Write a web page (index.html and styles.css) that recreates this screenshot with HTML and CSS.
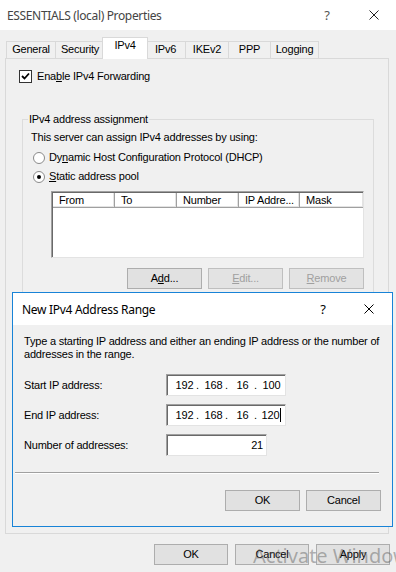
FILE: index.html
```html
<!DOCTYPE html>
<html>
<head>
<meta charset="utf-8">
<link rel="stylesheet" href="styles.css">
</head>
<body>
<div class="win">
  <div class="titlebar">
    <span class="title">ESSENTIALS (local) Properties</span>
    <span class="help">?</span>
    <svg class="close" width="10" height="10" viewBox="0 0 10 10"><path d="M0.5 0.5 L9.5 9.5 M9.5 0.5 L0.5 9.5" stroke="#222" stroke-width="1" fill="none"/></svg>
  </div>

  <div class="tabs">
    <div class="tab t-general">General</div>
    <div class="tab t-security">Security</div>
    <div class="tab t-ipv4 sel">IPv4</div>
    <div class="tab t-ipv6">IPv6</div>
    <div class="tab t-ikev2">IKEv2</div>
    <div class="tab t-ppp">PPP</div>
    <div class="tab t-logging">Logging</div>
  </div>

  <div class="panel">
    <div class="check-row">
      <span class="checkbox"><svg width="9" height="9" viewBox="0 0 9 9"><path d="M1 4 L3.5 6.5 L8 1.5" stroke="#000" stroke-width="1.8" fill="none"/></svg></span>
      <span class="lbl">Ena<u>b</u>le IPv4 Forwarding</span>
    </div>

    <div class="group">
      <div class="legend">IPv4 address assignment</div>
      <div class="desc">This server can assign IPv4 addresses by using:</div>
      <div class="radio-row r1"><span class="radio"></span><span class="lbl">Dy<u>n</u>amic Host Configuration Protocol (DHCP)</span></div>
      <div class="radio-row r2"><span class="radio on"></span><span class="lbl"><u>S</u>tatic address pool</span></div>
      <div class="list">
        <div class="list-head">
          <div class="col c1">From</div>
          <div class="col c2">To</div>
          <div class="col c3">Number</div>
          <div class="col c4">IP Addre...</div>
          <div class="col c5">Mask</div>
        </div>
      </div>
      <div class="btn-row">
        <div class="btn">A<u>d</u>d...</div>
        <div class="btn dis"><u>E</u>dit...</div>
        <div class="btn dis"><u>R</u>emove</div>
      </div>
    </div>
  </div>

  <div class="footer">
    <div class="btn wide">OK</div>
    <div class="btn wide">Cancel</div>
    <div class="btn wide">Apply</div>
  </div>

  <div class="dialog">
    <div class="dlg-title">
      <span class="title">New IPv4 Address Range</span>
      <span class="help">?</span>
      <svg class="close" width="10" height="10" viewBox="0 0 10 10"><path d="M0.5 0.5 L9.5 9.5 M9.5 0.5 L0.5 9.5" stroke="#000" stroke-width="1" fill="none"/></svg>
    </div>
    <div class="dlg-body">
      <p class="intro">Type a starting IP address and either an ending IP address or the number of addresses in the range.</p>
      <div class="field">
        <span class="flabel">Start IP address:</span>
        <div class="ip"><span class="num">192</span><span class="dot">.</span><span class="num">168</span><span class="dot">.</span><span class="num">16</span><span class="dot">.</span><span class="num">100</span></div>
      </div>
      <div class="field">
        <span class="flabel">End IP address:</span>
        <div class="ip"><span class="num">192</span><span class="dot">.</span><span class="num">168</span><span class="dot">.</span><span class="num">16</span><span class="dot">.</span><span class="num">120<span class="caret"></span></span></div>
      </div>
      <div class="field">
        <span class="flabel">Number of addresses:</span>
        <div class="numbox">21</div>
      </div>
      <div class="sep"></div>
      <div class="dlg-btns">
        <div class="btn">OK</div>
        <div class="btn">Cancel</div>
      </div>
    </div>
  </div>

  <div class="watermark">Activate Windows</div>
</div>
</body>
</html>
```

FILE: styles.css
```css
* { box-sizing: border-box; }
body {
  margin: 0;
  background: #f0f0f0;
  font-family: "Liberation Sans", Arial, sans-serif;
  font-size: 11px;
  letter-spacing: -0.2px;
  color: #000;
}
u { text-decoration: underline; text-underline-offset: 1px; }

.win {
  position: relative;
  width: 396px;
  height: 572px;
  overflow: hidden;
}

.titlebar {
  height: 30px;
  background: #fff;
  display: flex;
  align-items: center;
  padding-left: 7px;
}
.titlebar .title {
  font-family: "Noto Sans", sans-serif;
  font-size: 12px;
  letter-spacing: -0.35px;
  color: #444;
  flex: 1;
}
.help {
  font-family: "Noto Sans", sans-serif;
  font-size: 13px;
  letter-spacing: 0;
}
.titlebar .help { color: #555; margin-right: 39px; }
.titlebar .close { margin-right: 17px; }

.tabs {
  display: flex;
  align-items: flex-end;
  height: 22px;
  margin: 7px 0 -1px 6px;
  position: relative;
  z-index: 1;
}
.tab {
  height: 17px;
  margin-bottom: 1px;
  border: 1px solid #d9d9d9;
  border-bottom: none;
  margin-right: -1px;
  background: #f0f0f0;
  text-align: center;
  padding-top: 1px;
  line-height: 13px;
}
.tab.sel {
  height: 22px;
  margin-bottom: 0;
  background: #fff;
  padding-top: 1px;
  margin-left: -2px;
  margin-right: -3px;
  position: relative;
  z-index: 2;
}
.t-general { width: 50px; }
.t-security { width: 50px; }
.t-ipv4 { width: 46px; }
.t-ipv6 { width: 41px; }
.t-ikev2 { width: 44px; }
.t-ppp { width: 43px; }
.t-logging { width: 49px; }

.panel {
  margin-left: 5px;
  width: 384px;
  height: 476px;
  border: 1px solid #d9d9d9;
  background: #f0f0f0;
  overflow: hidden;
}

.check-row {
  display: flex;
  align-items: center;
  margin-top: 11px;
  padding-left: 13px;
  height: 13px;
}
.checkbox {
  width: 13px;
  height: 13px;
  background: #fff;
  border: 1px solid #333;
  display: flex;
  align-items: center;
  justify-content: center;
  margin-right: 5px;
}
.lbl { line-height: 13px; }

.group {
  margin: 36px 0 0 16px;
  width: 352px;
  height: 182px;
  border: 1px solid #dcdcdc;
}
.legend {
  width: fit-content;
  margin: -7px 0 0 5px;
  padding: 0 1px;
  line-height: 13px;
  background: #f0f0f0;
}
.desc {
  margin: 5px 0 0 8px;
  line-height: 13px;
}
.radio-row {
  display: flex;
  align-items: center;
  height: 13px;
  padding-left: 10px;
}
.radio-row.r1 { margin-top: 7px; }
.radio-row.r2 { margin-top: 6px; }
.radio {
  width: 12px;
  height: 12px;
  border-radius: 50%;
  border: 1px solid #8a8a8a;
  background: #fff;
  margin-right: 4px;
  display: flex;
  align-items: center;
  justify-content: center;
}
.radio.on::before {
  content: "";
  width: 4px;
  height: 4px;
  border-radius: 50%;
  background: #000;
}

.list {
  margin: 8px 0 0 28px;
  width: 313px;
  height: 67px;
  background: #fff;
  border: 1px solid;
  border-color: #a0a0a0 #e3e3e3 #e3e3e3 #a0a0a0;
  box-shadow: inset 1px 1px 0 #696969;
  padding: 1px 0 0 1px;
}
.list-head {
  display: flex;
  height: 15px;
}
.col {
  height: 15px;
  line-height: 14px;
  padding-left: 6px;
  border-right: 1px solid #a0a0a0;
  border-bottom: 1px solid #a0a0a0;
  box-shadow: inset -1px -1px 0 #e3e3e3;
  background: #fff;
}
.c1 { width: 62px; }
.c2 { width: 62px; }
.c3 { width: 62px; }
.c4 { width: 61px; }
.c5 { width: 63px; border-right: none; }

.btn-row {
  display: flex;
  gap: 6px;
  margin: 10px 0 0 104px;
}
.btn {
  width: 75px;
  height: 21px;
  border: 1px solid #adadad;
  background: #e1e1e1;
  display: flex;
  align-items: center;
  justify-content: center;
  line-height: 13px;
}
.btn.dis {
  color: #a0a0a0;
  border-color: #bfbfbf;
  background: #e3e3e3;
}

.footer {
  display: flex;
  gap: 7px;
  margin: 10px 0 0 154px;
}
.btn.wide { width: 74px; }

.dialog {
  position: absolute;
  left: 12px;
  top: 292px;
  width: 381px;
  height: 235px;
  border: 1px solid #1883d7;
  background: #f0f0f0;
  z-index: 5;
}
.dlg-title {
  height: 32px;
  background: #fff;
  display: flex;
  align-items: center;
  padding-left: 9px;
}
.dlg-title .title {
  font-family: "Noto Sans", sans-serif;
  font-size: 12px;
  letter-spacing: -0.3px;
  flex: 1;
}
.dlg-title .help { margin-right: 38px; }
.dlg-title .close { margin-right: 18px; }

.dlg-body {
  padding-left: 11px;
}
.intro {
  margin: 10px 0 0 0;
  line-height: 13px;
  width: 360px;
}
.field {
  display: flex;
  align-items: center;
  height: 22px;
  margin-top: 8px;
}
.field + .field { margin-top: 8px; }
.intro + .field { margin-top: 13px; }
.flabel { width: 142px; }
.ip, .numbox {
  height: 22px;
  background: #fff;
  border: 1px solid;
  border-color: #a0a0a0 #e3e3e3 #e3e3e3 #a0a0a0;
  box-shadow: inset 1px 1px 0 #696969;
}
.ip {
  width: 120px;
  display: flex;
  align-items: center;
  padding-left: 7px;
}
.num { width: 21px; text-align: center; display: inline-flex; justify-content: center; align-items: center; }
.dot { width: 8px; padding-left: 1px; }
.caret {
  display: inline-block;
  width: 1px;
  height: 14px;
  background: #000;
  margin-left: 1px;
}
.numbox {
  width: 101px;
  display: flex;
  align-items: center;
  justify-content: flex-end;
  padding-right: 3px;
}
.sep {
  margin: 16px 0 0 -9px;
  width: 364px;
  height: 2px;
  border-top: 1px solid #a0a0a0;
  border-bottom: 1px solid #fff;
}
.dlg-btns {
  display: flex;
  gap: 6px;
  margin: 16px 0 0 201px;
}

.watermark {
  position: absolute;
  left: 253px;
  top: 542px;
  font-family: "Noto Sans", sans-serif;
  font-size: 20px;
  letter-spacing: 0;
  color: rgba(90, 90, 90, 0.45);
  white-space: nowrap;
  z-index: 6;
}
```
